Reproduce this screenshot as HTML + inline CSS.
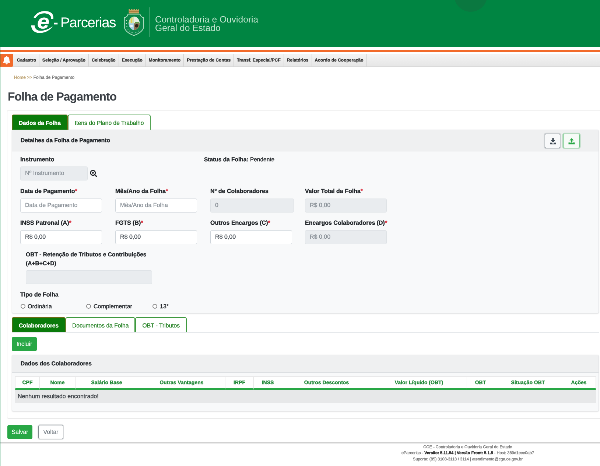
<!DOCTYPE html>
<html lang="pt-BR">
<head>
<meta charset="utf-8">
<title>Folha de Pagamento</title>
<style>
*{box-sizing:border-box}
html,body{margin:0;padding:0;background:#fff;overflow:hidden;width:600px;height:466px}
body{font-family:"Liberation Sans",Arial,sans-serif}
#cv{-webkit-text-stroke:.42px;text-rendering:geometricPrecision;position:absolute;left:0;top:0;width:1629px;height:1266px;transform:scale(0.36832);transform-origin:0 0;will-change:transform;background:#fff;font-size:16px;line-height:1.5;color:#212529;overflow:hidden}
.abs{position:absolute}
/* header */
#hdr{left:0;top:0;width:1629px;height:128px;background:#008542;overflow:hidden}
#circ{left:1233px;top:-58px;width:90px;height:90px;border-radius:50%;background:#0a7840}
#ptxt{-webkit-text-stroke:0;left:146px;top:36px;font-size:38.5px;line-height:52px;color:#fff;white-space:nowrap}
#dvd{left:405px;top:20px;width:2px;height:80px;background:rgba(255,255,255,.2)}
#cge{-webkit-text-stroke:0;left:421px;top:43px;font-size:24.6px;line-height:22.7px;color:#bfe3cd;white-space:nowrap}
#oline{left:0;top:136px;width:1629px;height:5px;background:#f26a2a}
#lstrip{left:0;top:128px;width:2.500px;height:1138px;background:rgba(0,133,66,.22);z-index:5}
/* menu */
#menu{left:0;top:146px;width:1629px;height:35px;background:linear-gradient(#f4f4f4,#e6e6e6);border-bottom:1px solid #d8d8d8}
#bell{left:0;top:146px;width:36px;height:35px;background:#f26a2a;border-radius:0 4px 4px 0}
#menu ul{list-style:none;margin:0;padding:0 0 0 38px;display:flex;height:35px}
#menu li{font-size:12px;font-weight:bold;color:#333;line-height:35px;padding:0 8px;border-right:1px solid #cfcfcf;white-space:nowrap}
#bc{left:38px;top:203px;font-size:12px;line-height:14px;color:#777;white-space:nowrap}
#bc a{color:#bda272;text-decoration:none}
h2{position:absolute;left:21px;top:240px;margin:0;font-size:32px;letter-spacing:-1px;line-height:44px;font-weight:bold;color:#3a3f45;white-space:nowrap}
/* cards */
#ocard{left:19px;top:299px;width:1640px;height:838px;border:1.500px solid #e4e4e4;border-radius:4px;background:#fff}
.tabs{display:flex;height:42px}
.tab{height:42px;padding:2px 15px 0 15px;font-size:15.700px;line-height:40px;border:2px solid #3f993f;border-bottom-width:1px;border-radius:5px 5px 0 0;color:#1e7e1e;background:#fff;white-space:nowrap;margin-right:0}
.tab.on{background:#0a7a0a;border-color:#6b6b14;color:#fff;font-weight:bold;font-size:15.3px;padding-left:17px;padding-right:17px}
.panel{background:#f8f9fa;border:1px solid #dfe1e4;border-radius:4px;box-shadow:0 1px 3px rgba(0,0,0,.12)}
.phead{font-size:15.500px;background:#eff0f1;border-bottom:1.500px solid #d9dcdf;font-weight:bold;color:#212529;white-space:nowrap}
label,.lb{font-weight:bold;color:#212529;white-space:nowrap;line-height:24px;position:absolute;margin-top:1px}
.lb,.phead,.tab.on,th,#menu li,#foot b{-webkit-text-stroke:.45px}
h2{-webkit-text-stroke:.1px}
.lb i{font-style:normal;color:#dc3545}
.in{position:absolute;height:38px;width:222px;border:1px solid #ced4da;border-radius:4px;background:#fff;color:#8a9198;font-size:16px;line-height:36px;padding:0 12px;white-space:nowrap;overflow:hidden}
.in.dis{background:#e9ecef;border-color:#dde1e5}
.rd{position:absolute;width:13px;height:13px;border:2px solid #858585;border-radius:50%;background:#fff}
.rt{position:absolute;color:#212529;line-height:24px;white-space:nowrap;margin-top:2px}
.btn{-webkit-text-stroke:.2px;position:absolute;height:38px;border-radius:4px;line-height:38px;text-align:center;white-space:nowrap}
.bg{background:#28a745;border:1px solid #28a745;color:#fff}
.bo{background:#fff;border:1px solid #7d858c;color:#6c757d;box-shadow:0 0 0 2px rgba(108,117,125,.22)}
table{border-collapse:separate;border-spacing:0;table-layout:fixed;position:absolute;left:8px;top:10px}
th{height:37px;background:#fff;color:#218838;font-weight:bold;font-size:14px;text-align:center;border-left:1px solid #e3e3e3;border-right:0;border-top:1px solid #e3e3e3;border-bottom:6px solid #28a745;padding:0;white-space:nowrap}
td{height:35px;background:#e7e8e9;color:#3a3f44;padding:0 7px;font-size:16px;text-align:left}
#fline{left:0;top:1201px;width:1629px;height:3px;background:#cdcdcd}
#foot{left:1020px;top:1206px;width:500px;text-align:center;font-size:11px;line-height:16.4px;color:#707070;white-space:nowrap}
#foot b{color:#222}
</style>
</head>
<body>
<div id="cv">
  <div id="hdr" class="abs">
    <div id="circ" class="abs"></div>
    <svg class="abs" style="left:80px;top:25px" width="70" height="70" viewBox="0 0 70 70">
      <path d="M11 24 C17 8 38 1 55 7.500 C63 11 66 18 64.500 27 L59 27 C59.500 20 56 15.500 50 13 C38 8.500 23 12.500 17 24 Z" fill="#fff"/>
      <path d="M5 44 C4 58 18 66.500 32 64.500 C46 62.500 57 56 63 46 C54 53 44 57.500 33 58.500 C22 59.500 14.500 54 14 44 Z" fill="#fff"/>
      <text transform="translate(21,52) scale(1.100,1)" x="0" y="0" font-family="Liberation Sans, sans-serif" font-weight="bold" font-style="italic" font-size="54" fill="#fff" stroke="#fff" stroke-width=".700">e</text>
    </svg>
    <div id="ptxt" class="abs"><span style="position:absolute;left:-1px;top:0;font-weight:bold">-</span><span style="position:absolute;left:18px;top:0;letter-spacing:-1.4px">Parcerias</span></div>
    <svg class="abs" style="left:330px;top:20px" width="66" height="80" viewBox="0 0 66 80">
      <path d="M19.500 16.500 V4.500 h3.500 v2.500 h3 v-2.500 h3.500 v2.500 h3 v-2.500 h3.500 v2.500 h3 v-2.500 h3.500 v2.500 h3 v-2.500 h2.500 V16.500 Z" fill="#c9a262"/>
      <path d="M20 11.500 H48" stroke="#a67c3e" stroke-width="2.500"/>
      <path d="M17.500 18.500 H50 C51 23 55 27 60 28 V54 C58 64 48 71 33.600 76.500 C19 71 9.500 64 7.700 54 V28 C13 27 16.500 23 17.500 18.500 Z" fill="#0c874a" stroke="#a9d9bc" stroke-width="2.200"/>
      <ellipse cx="34.200" cy="43.300" rx="14.800" ry="18" fill="#e3efd9"/>
      <path d="M19.400 43.300 A14.800 18 0 0 1 34.200 25.300 V43.300 Z" fill="#cfe3a8"/>
      <path d="M34.200 25.300 A14.800 18 0 0 1 49 43.300 H34.200 Z" fill="#e6efe2"/>
      <path d="M19.400 43.300 H34.200 V61.300 A14.800 18 0 0 1 19.400 43.300 Z" fill="#a6d0e2"/>
      <path d="M34.200 43.300 H49 A14.800 18 0 0 1 34.200 61.300 Z" fill="#8a6f52"/>
      <path d="M25.500 30 h3 v13 h-3 z" fill="#e6cf4e"/>
      <circle cx="41" cy="50" r="4.500" fill="#2a2018"/>
      <path d="M36 40 h11 v3.500 h-11 z" fill="#5f9a48"/>
      <path d="M24 47 h6 v6 h-6 z" fill="#eef6f8"/>
      <g fill="#cfe9d8"><circle cx="14.500" cy="52" r="1.200"/><circle cx="17.500" cy="59" r="1.200"/><circle cx="22.500" cy="64.500" r="1.200"/><circle cx="28.500" cy="68.500" r="1.200"/><circle cx="39" cy="68.500" r="1.200"/><circle cx="45" cy="64.500" r="1.200"/><circle cx="13.500" cy="44" r="1.200"/><circle cx="14" cy="36" r="1.200"/></g>
    </svg>
    <div id="dvd" class="abs"></div>
    <div id="cge" class="abs">Controladoria e Ouvidoria<br>Geral do Estado</div>
  </div>
  <div id="lstrip" class="abs"></div>
  <div id="oline" class="abs"></div>
  <div id="menu" class="abs">
    <ul>
      <li>Cadastro</li><li>Seleção / Aprovação</li><li>Celebração</li><li>Execução</li><li>Monitoramento</li><li>Prestação de Contas</li><li>Transf. Especial/PCF</li><li>Relatórios</li><li>Acordo de Cooperação</li>
    </ul>
  </div>
  <div id="bell" class="abs">
    <svg width="36" height="35" viewBox="0 0 36 35"><path d="M18 6 c-1.300 0 -2 .8 -2 1.800 c-4 1 -5.500 4.500 -5.500 8.500 c0 4 -1 5.500 -2.500 7 v1.200 h20 v-1.200 c-1.500 -1.500 -2.500 -3 -2.500 -7 c0 -4 -1.500 -7.500 -5.500 -8.500 c0 -1 -.7 -1.800 -2 -1.800 z M15.300 26 a2.700 2.700 0 0 0 5.400 0 z" fill="#fff"/></svg>
  </div>
  <div id="bc" class="abs"><a>Home &gt;&gt;</a> Folha de Pagamento</div>
  <h2>Folha de Pagamento</h2>

  <div id="ocard" class="abs"></div>

  <div class="abs tabs" style="left:32px;top:311px">
    <div class="tab on">Dados da Folha</div><div class="tab" style="padding-left:17px;padding-right:17px">Itens do Plano de Trabalho</div>
  </div>
  <div class="abs panel" style="left:32px;top:352px;width:1594px;height:499px">
    <div class="phead" style="height:58px;line-height:58px;padding-left:23px">Detalhes da Folha de Pagamento</div>
    <div class="btn" style="left:1446px;top:10px;width:42px;height:39px;background:#f8f9fa;border:1px solid #858d95;box-shadow:0 0 0 2.500px rgba(108,117,125,.28)">
      <svg class="abs" style="left:13px;top:11px" width="17" height="17" viewBox="0 0 16 16"><path d="M6 0h4v5.500h3.500L8 11.500L2.500 5.500H6z" fill="#3d4852"/><path d="M0 11.500h4.200L8 15l3.800 -3.500H16V16H0z" fill="#3d4852"/></svg>
    </div>
    <div class="btn" style="left:1496px;top:10px;width:45px;height:39px;background:#f6fbf7;border:1px solid #5dbf73;box-shadow:0 0 0 2.500px rgba(40,167,69,.28)">
      <svg class="abs" style="left:13px;top:11px" width="18" height="17" viewBox="0 0 16 16"><path d="M8 0l5.500 6H10v5.500H6V6H2.500z" fill="#28a745"/><path d="M0 11h5v1.800h6V11h5v5H0z" fill="#28a745"/></svg>
    </div>

    <div class="lb" style="left:22px;top:68px">Instrumento</div>
    <div class="lb" style="left:521px;top:68px;font-size:15.500px">Status da Folha: <span style="font-weight:normal">Pendente</span></div>
    <div class="in dis" style="left:22px;top:99px;width:183px">Nº Instrumento</div>
    <svg class="abs" style="left:210.500px;top:108px" width="20" height="20" viewBox="0 0 20 20"><circle cx="8.300" cy="8.300" r="6.600" fill="none" stroke="#212529" stroke-width="2.800"/><path d="M13.300 13.300 L18.300 18.300" stroke="#212529" stroke-width="3.200" stroke-linecap="round"/><path d="M5 8.300h6.600M8.300 5v6.600" stroke="#212529" stroke-width="2.400"/></svg>

    <div class="lb" style="left:22px;top:154px">Data de Pagamento<i>*</i></div>
    <div class="lb" style="left:280px;top:154px">Mês/Ano da Folha<i>*</i></div>
    <div class="lb" style="left:538px;top:154px">Nº de Colaboradores</div>
    <div class="lb" style="left:795px;top:154px">Valor Total da Folha<i>*</i></div>
    <div class="in" style="left:22px;top:186px">Data de Pagamento</div>
    <div class="in" style="left:280px;top:186px">Mês/Ano da Folha</div>
    <div class="in dis" style="left:538px;top:186px;width:227px">0</div>
    <div class="in dis" style="left:795px;top:186px">R$ 0,00</div>

    <div class="lb" style="left:22px;top:240px">INSS Patronal (A)<i>*</i></div>
    <div class="lb" style="left:280px;top:240px">FGTS (B)<i>*</i></div>
    <div class="lb" style="left:538px;top:240px">Outros Encargos (C)<i>*</i></div>
    <div class="lb" style="left:795px;top:240px">Encargos Colaboradores (D)<i>*</i></div>
    <div class="in" style="left:22px;top:272px;color:#495057">R$ 0,00</div>
    <div class="in" style="left:280px;top:272px;color:#495057">R$ 0,00</div>
    <div class="in" style="left:538px;top:272px;color:#495057">R$ 0,00</div>
    <div class="in dis" style="left:795px;top:272px">R$ 0,00</div>

    <div class="lb" style="left:37px;top:326px;font-size:15.600px">OBT - Retenção de Tributos e Contribuições<br>(A+B+C+D)</div>
    <div class="in dis" style="left:37px;top:381px;width:343px;height:37px"></div>

    <div class="lb" style="left:22px;top:435px">Tipo de Folha</div>
    <div class="rd" style="left:23px;top:472px"></div><div class="rt" style="left:42px;top:466px">Ordinária</div>
    <div class="rd" style="left:201px;top:472px"></div><div class="rt" style="left:221px;top:466px">Complementar</div>
    <div class="rd" style="left:381px;top:472px"></div><div class="rt" style="left:401px;top:466px">13°</div>
  </div>

  <div class="abs tabs" style="left:32px;top:861px">
    <div class="tab on">Colaboradores</div><div class="tab" style="padding-left:16px;padding-right:16px">Documentos da Folha</div><div class="tab" style="padding-left:17px;padding-right:17px">OBT - Tributos</div>
  </div>
  <div class="abs" style="left:32px;top:902px;width:1594px;height:1px;background:#dee2e6"></div>
  <div class="btn bg" style="left:32px;top:915px;width:68px">Incluir</div>

  <div class="abs panel" style="left:32px;top:963px;width:1594px;height:154px">
    <div class="phead" style="height:48px;line-height:47px;padding-left:23px">Dados dos Colaboradores</div>
    <div class="abs" style="left:0;top:48px;width:1592px;height:104px">
      <table>
        <colgroup><col style="width:66px"><col style="width:97px"><col style="width:170px"><col style="width:237px"><col style="width:77px"><col style="width:77px"><col style="width:242px"><col style="width:260px"><col style="width:74px"><col style="width:184px"><col style="width:93px"></colgroup>
        <tr><th>CPF</th><th>Nome</th><th>Salário Base</th><th>Outras Vantagens</th><th>IRPF</th><th>INSS</th><th>Outros Descontos</th><th>Valor Líquido (OBT)</th><th>OBT</th><th>Situação OBT</th><th style="border-right:1px solid #e3e3e3">Ações</th></tr>
        <tr><td colspan="11">Nenhum resultado encontrado!</td></tr>
      </table>
    </div>
  </div>

  <div class="btn bg" style="left:20px;top:1154px;width:68px">Salvar</div>
  <div class="btn bo" style="left:104px;top:1154px;width:68px">Voltar</div>

  <div id="fline" class="abs"></div>
  <div id="foot" class="abs">CGE - Controladoria e Ouvidoria Geral do Estado<br>eParcerias - <b>Versão: 5.11.54 | Versão Front: 5.1.5</b> - Host: 389d1ece0ab7<br>Suporte: (85) 3108-3113 / 3114 | atendimento@cge.ce.gov.br</div>
</div>
</body>
</html>
